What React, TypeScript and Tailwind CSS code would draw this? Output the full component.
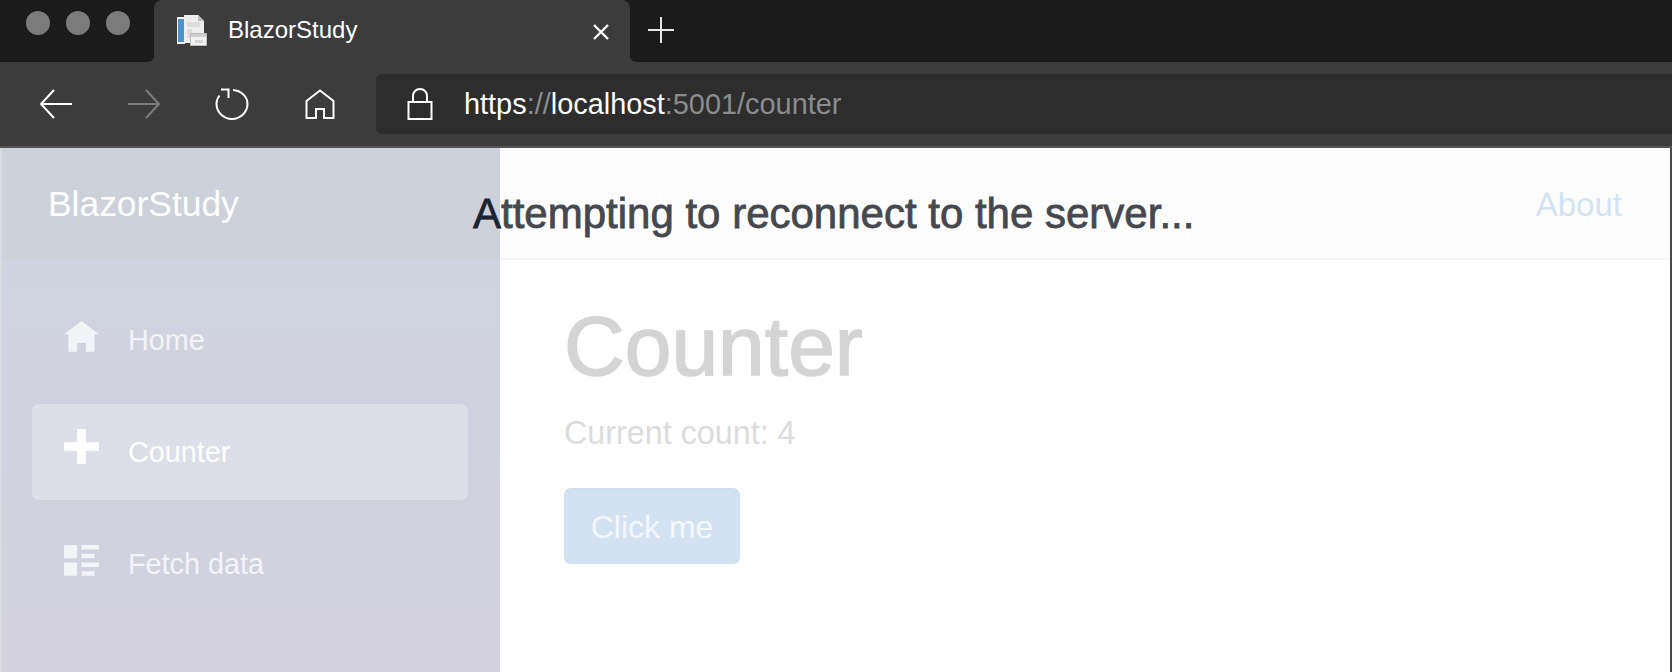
import React from "react";

const FONT = "font-['Liberation_Sans','Arial',sans-serif]";

/* ------------------------------ Browser icons ----------------------------- */
function BackIcon({ cls }: { cls: string }) {
  return (
    <svg width="34" height="30" viewBox="0 0 34 30" fill="none" stroke="currentColor" strokeWidth="2" className={cls}>
      <path d="M33 15H2M15 1 2 15l13 14" />
    </svg>
  );
}

function ForwardIcon({ cls }: { cls: string }) {
  return (
    <svg width="34" height="30" viewBox="0 0 34 30" fill="none" stroke="currentColor" strokeWidth="2" className={cls}>
      <path d="M1 15h31M19 1l13 14-13 14" />
    </svg>
  );
}

function ReloadIcon({ cls }: { cls: string }) {
  return (
    <svg width="34" height="32" viewBox="0 0 34 32" fill="none" stroke="currentColor" strokeWidth="2" className={cls}>
      <path d="M18 2c8 .5 14.500 6.500 14.500 14 0 8-7 15-15.500 15S1.500 24 1.500 16c0-3 1-6 3-8.500" />
      <path d="M6 1.500h7.500V10" />
    </svg>
  );
}

function HomeOutline({ cls }: { cls: string }) {
  return (
    <svg width="30" height="30" viewBox="0 0 30 30" fill="none" stroke="currentColor" strokeWidth="2" className={cls}>
      <path d="M1.500 12 15 1.500 28.500 12v17H19v-9h-8v9H1.500z" />
    </svg>
  );
}

function LockIcon({ cls }: { cls: string }) {
  return (
    <svg width="26" height="32" viewBox="0 0 26 32" fill="none" stroke="currentColor" strokeWidth="2" className={cls}>
      <path d="M1.500 14h23v17h-23zM6 14V8c0-4 3-7 7-7s7 3 7 7v6" />
    </svg>
  );
}

function Favicon() {
  return (
    <svg width="33" height="33" viewBox="0 0 33 33" className="shrink-0">
      <path d="M2 3h8v27H2z" fill="#eef2f5" />
      <path d="M3 5h6v23H3z" fill="#4a94cc" />
      <path d="M9 1h14l6 6v22H9z" fill="#eeeeee" />
      <path d="M23 1l6 6h-6z" fill="#bdbdbd" />
      <path d="M12 8h13v5H12zM12 15h5v9h-5z" fill="#dcdcdc" />
      <path d="M15.500 19.500h16v12h-16z" fill="#f2f2f2" stroke="#bcbcbc" strokeWidth="1" />
      <path d="M16 20h15v3H16z" fill="#cfcfcf" />
      <path d="M20 26h8v3h-8z" fill="#d4d4d4" />
    </svg>
  );
}

/* ------------------------------- Open iconic ------------------------------ */
const ICONS = {
  home: "M4 0l-4 3h1v4h2v-2h2v2h2v-4.030l1 .030-4-3z",
  plus: "M3 0v3h-3v2h3v3h2v-3h3v-2h-3v-3h-2z",
  list: "M0 0v3h3v-3h-3zm4 0v1h4v-1h-4zm0 2v1h3v-1h-3zm-4 2v3h3v-3h-3zm4 0v1h4v-1h-4zm0 2v1h3v-1h-3z",
};

function NavItem({ icon, label, active }: { icon: keyof typeof ICONS; label: string; active?: boolean }) {
  return (
    <div
      className={`flex h-[96px] items-center gap-[29px] rounded-[7px] pl-[32px] text-[28.8px] ${
        active ? "bg-[#dcdfe8] text-white" : "text-[#f3f4f7]"
      }`}
    >
      <svg
        width="35"
        height="35"
        viewBox="0 0 8 8"
        fill="currentColor"
        className={`shrink-0 ${icon === "plus" ? "mb-[11px]" : "mb-[3px]"}`}
      >
        <path d={ICONS[icon]} />
      </svg>
      <span className="mt-[2px]">{label}</span>
    </div>
  );
}

/* ---------------------------------- App ----------------------------------- */
export default function App() {
  return (
    <div className={`relative flex h-[672px] w-[1672px] flex-col overflow-hidden bg-white ${FONT}`}>
      {/* tab strip */}
      <div className="flex h-[62px] shrink-0 bg-[#3c3c3c]">
        <div className="flex w-[154px] shrink-0 items-start gap-[16px] rounded-br-[6px] bg-[#1b1b1b] pl-[26px] pt-[11px]">
          <span className="h-[24px] w-[24px] rounded-full bg-[#7b7b7b]" />
          <span className="h-[24px] w-[24px] rounded-full bg-[#7b7b7b]" />
          <span className="h-[24px] w-[24px] rounded-full bg-[#7b7b7b]" />
        </div>
        <div className="w-[476px] shrink-0 bg-[linear-gradient(#1b1b1b_50%,#3c3c3c_50%)]">
          <div className="flex h-full items-center rounded-t-[8px] bg-[#3c3c3c] pb-[2px] pl-[21px] pr-[20px] text-white">
            <Favicon />
            <span className="ml-[20px] text-[24px]">BlazorStudy</span>
            <svg width="18" height="18" viewBox="0 0 18 18" fill="none" stroke="currentColor" strokeWidth="2.400" className="ml-auto mt-[3px]">
              <path d="M2 2l14 14M16 2 2 16" />
            </svg>
          </div>
        </div>
        <div className="flex flex-1 items-center rounded-bl-[6px] bg-[#1b1b1b] pb-[2px] pl-[18px] text-[#e6e6e6]">
          <svg width="26" height="26" viewBox="0 0 26 26" stroke="currentColor" strokeWidth="2">
            <path d="M13 0v26M0 13h26" />
          </svg>
        </div>
      </div>

      {/* toolbar */}
      <div className="flex h-[86px] shrink-0 border-b-2 border-[#555555] bg-[#3c3c3c] pl-[39px] pt-[12px]">
        <div className="flex h-[60px] w-[337px] shrink-0 items-center">
          <BackIcon cls="text-white" />
          <ForwardIcon cls="ml-[54px] text-[#7d7d7d]" />
          <ReloadIcon cls="ml-[54px] text-white" />
          <HomeOutline cls="ml-[56px] text-white" />
        </div>
        <div className="flex h-[60px] flex-1 items-center rounded-l-[6px] bg-[#2d2d2d] pl-[31px] text-[28.900px] text-[#8c8c8c]">
          <LockIcon cls="shrink-0 text-white" />
          <span className="ml-[31px] mt-[2px] whitespace-nowrap">
            <span className="text-white">https</span>://<span className="text-white">localhost</span>:5001/counter
          </span>
        </div>
      </div>

      {/* page */}
      <div className="flex min-h-0 flex-1">
        <aside className="flex w-[500px] shrink-0 flex-col border-l-2 border-[#d9dae2] bg-[linear-gradient(180deg,#ced3e0,#d3d1de)]">
          <div className="flex h-[112px] shrink-0 items-center bg-[#cdd1da] pl-[46px] pt-[2px] text-[35.400px] text-white">
            BlazorStudy
          </div>
          <nav className="flex flex-col gap-[16px] pl-[30px] pr-[32px] pt-[32px]">
            <NavItem icon="home" label="Home" />
            <NavItem icon="plus" label="Counter" active />
            <NavItem icon="list" label="Fetch data" />
          </nav>
        </aside>

        <main className="flex min-w-0 flex-1 flex-col border-r-2 border-[#4a4a4a]">
          <div className="flex h-[112px] shrink-0 items-center justify-end border-b-2 border-[#f6f6f6] bg-[#fdfdfd] pr-[48px] pt-[3px] text-[33px] text-[#d3e3f6]">
            About
          </div>
          <div className="flex flex-col items-start pl-[64px] pt-[36px]">
            <h1 className="text-[84px] leading-[100px] text-[#d4d4d4] [-webkit-text-stroke:1.500px_#d4d4d4]">Counter</h1>
            <p className="mt-[17px] text-[32.300px] leading-[40px] text-[#dcdcdc]">Current count: 4</p>
            <button className="mt-[35px] flex h-[76px] w-[176px] items-center justify-center rounded-[7px] border-2 border-[#cfe0f2] bg-[#d3e2f2] pt-[1px] text-[32px] text-[#f3f7fc]">
              Click me
            </button>
          </div>
        </main>
      </div>

      {/* reconnect message sits on top of everything */}
      <div className="absolute left-[473px] top-[190px] whitespace-nowrap text-[42px] leading-[48px] text-[#45484d] [-webkit-text-stroke:0.800px_currentColor]">
        <span className="text-[#1a2432]">A</span>ttempting to reconnect to the server...
      </div>
    </div>
  );
}
